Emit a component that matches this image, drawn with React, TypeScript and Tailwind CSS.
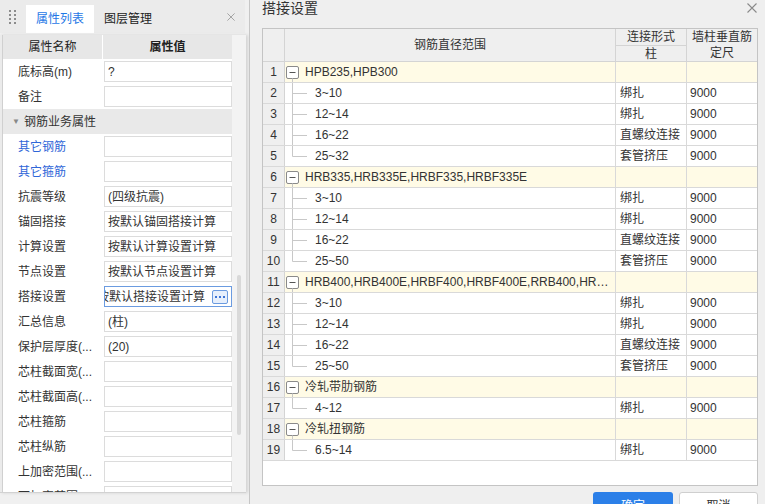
import React from "react";

type PropRow =
    | { kind: "group"; label: string }
    | { kind: "item"; label: string; value?: string; blue?: boolean; active?: boolean };

const propRows: PropRow[] = [
    { kind: "item", label: "底标高(m)", value: "?" },
    { kind: "item", label: "备注" },
    { kind: "group", label: "钢筋业务属性" },
    { kind: "item", label: "其它钢筋", blue: true },
    { kind: "item", label: "其它箍筋", blue: true },
    { kind: "item", label: "抗震等级", value: "(四级抗震)" },
    { kind: "item", label: "锚固搭接", value: "按默认锚固搭接计算" },
    { kind: "item", label: "计算设置", value: "按默认计算设置计算" },
    { kind: "item", label: "节点设置", value: "按默认节点设置计算" },
    { kind: "item", label: "搭接设置", value: "按默认搭接设置计算", active: true },
    { kind: "item", label: "汇总信息", value: "(柱)" },
    { kind: "item", label: "保护层厚度(...", value: "(20)" },
    { kind: "item", label: "芯柱截面宽(..." },
    { kind: "item", label: "芯柱截面高(..." },
    { kind: "item", label: "芯柱箍筋" },
    { kind: "item", label: "芯柱纵筋" },
    { kind: "item", label: "上加密范围(..." },
    { kind: "item", label: "下加密范围(..." },
];

type LapRow =
    | { kind: "group"; text: string }
    | { kind: "item"; range: string; mode: string; length: string; last?: boolean };

const lapRows: LapRow[] = [
    { kind: "group", text: "HPB235,HPB300" },
    { kind: "item", range: "3~10", mode: "绑扎", length: "9000" },
    { kind: "item", range: "12~14", mode: "绑扎", length: "9000" },
    { kind: "item", range: "16~22", mode: "直螺纹连接", length: "9000" },
    { kind: "item", range: "25~32", mode: "套管挤压", length: "9000", last: true },
    { kind: "group", text: "HRB335,HRB335E,HRBF335,HRBF335E" },
    { kind: "item", range: "3~10", mode: "绑扎", length: "9000" },
    { kind: "item", range: "12~14", mode: "绑扎", length: "9000" },
    { kind: "item", range: "16~22", mode: "直螺纹连接", length: "9000" },
    { kind: "item", range: "25~50", mode: "套管挤压", length: "9000", last: true },
    { kind: "group", text: "HRB400,HRB400E,HRBF400,HRBF400E,RRB400,HRB500,HRB500E,HRBF500,HRBF500E" },
    { kind: "item", range: "3~10", mode: "绑扎", length: "9000" },
    { kind: "item", range: "12~14", mode: "绑扎", length: "9000" },
    { kind: "item", range: "16~22", mode: "直螺纹连接", length: "9000" },
    { kind: "item", range: "25~50", mode: "套管挤压", length: "9000", last: true },
    { kind: "group", text: "冷轧带肋钢筋" },
    { kind: "item", range: "4~12", mode: "绑扎", length: "9000", last: true },
    { kind: "group", text: "冷轧扭钢筋" },
    { kind: "item", range: "6.5~14", mode: "绑扎", length: "9000", last: true },
];

function CloseX({ size = 9, color = "#9a9a9a" }: { size?: number; color?: string }) {
    return (
        <svg width={size} height={size} viewBox="0 0 10 10">
            <path d="M0.5 0.5 L9.5 9.5 M9.5 0.5 L0.5 9.5" stroke={color} strokeWidth="1.1" />
        </svg>
    );
}

function DragHandle() {
    return (
        <svg width="8" height="14" viewBox="0 0 8 14">
            {[0, 4, 8, 12].map((y) =>
                [0, 5].map((x) => <rect key={`${x}-${y}`} x={x} y={y} width="2" height="2" fill="#8c8c8c" />)
            )}
        </svg>
    );
}

function TreeLines({ group, last }: { group: boolean; last?: boolean }) {
    if (group) {
        return (
            <svg width="20" height="20" viewBox="0 0 20 20" className="shrink-0">
                <rect x="1.5" y="4.5" width="12" height="12" rx="1.5" fill="#fff" stroke="#8a8a8a" />
                <path d="M4.5 10.5 H10.5" stroke="#555" />
                <path d="M7.5 16.5 V20" stroke="#c8c8c8" />
            </svg>
        );
    }
    return (
        <svg width="30" height="20" viewBox="0 0 30 20" className="shrink-0">
            <path d={last ? "M7.5 0 V10.5" : "M7.5 0 V20"} stroke="#c8c8c8" />
            <path d="M7.5 10.5 H22" stroke="#c8c8c8" />
        </svg>
    );
}

function PropertyPanel() {
    return (
        <div className="flex w-[249px] shrink-0 flex-col bg-[#f0f0f0]">
            <div className="flex h-[33px] w-[245px] items-end bg-[#ebebeb]">
                <div className="flex h-full w-[26px] items-center pl-[9px]">
                    <DragHandle />
                </div>
                <div className="flex h-[28px] w-[68px] items-center justify-center bg-white text-[#1f78e6]">属性列表</div>
                <div className="flex h-[28px] w-[68px] items-center justify-center text-[#222]">图层管理</div>
                <div className="ml-auto flex h-full items-center pr-[10px]">
                    <CloseX size={8} />
                </div>
            </div>
            <div className="flex h-[460px] w-[249px] pt-[2px]">
                <div className="flex w-[246px] border-b border-[#d2d2d2] bg-[#ebebeb] pl-[2px] shadow-[2px_0_3px_rgba(0,0,0,0.12)]">
                    <div className="flex w-[230px] flex-col overflow-hidden border-l border-[#d0d0d0] bg-white">
                        <div className="flex h-[24px] shrink-0 bg-[#e7e7e7] text-[#222]">
                            <div className="flex w-[100px] items-center justify-center border-r border-white">属性名称</div>
                            <div className="flex flex-1 items-center justify-center font-bold">属性值</div>
                        </div>
                        {propRows.map((row, i) =>
                            row.kind === "group" ? (
                                <div key={i} className="flex h-[25px] shrink-0 items-center bg-[#e9e9e9] text-[#333]">
                                    <span className="w-[21px] pl-[9px] text-[8px] text-[#888]">▼</span>
                                    <span>{row.label}</span>
                                </div>
                            ) : (
                                <div key={i} className="flex h-[25px] shrink-0 items-center">
                                    <div
                                        className={`w-[101px] truncate pl-[15px] ${row.blue ? "text-[#2f66d8]" : "text-[#333]"}`}
                                    >
                                        {row.label}
                                    </div>
                                    {row.active ? (
                                        <div className="flex h-[21px] w-[128px] items-center border border-[#6b9be0] bg-white">
                                            <div className="min-w-0 flex-1 overflow-hidden">
                                                <span className="ml-[-8px] block whitespace-nowrap text-[#333]">
                                                    {row.value}
                                                </span>
                                            </div>
                                            <div className="mr-[3px] flex h-[14px] w-[16px] shrink-0 items-center justify-center rounded-[2px] border border-[#6b9be0] bg-[#e6effc]">
                                                <svg width="10" height="2" viewBox="0 0 10 2">
                                                    <rect x="0" y="0" width="2" height="2" fill="#3d74d6" />
                                                    <rect x="4" y="0" width="2" height="2" fill="#3d74d6" />
                                                    <rect x="8" y="0" width="2" height="2" fill="#3d74d6" />
                                                </svg>
                                            </div>
                                        </div>
                                    ) : (
                                        <div className="flex h-[21px] w-[128px] items-center border border-[#dcdcdc] bg-white pl-[3px] text-[#333]">
                                            {row.value}
                                        </div>
                                    )}
                                </div>
                            )
                        )}
                    </div>
                    <div className="flex w-[14px] justify-center bg-[#f3f3f3] pt-[240px]">
                        <div className="h-[160px] w-[4px] rounded-full bg-[#d9d9d9]" />
                    </div>
                </div>
            </div>
        </div>
    );
}

function LapDialog() {
    return (
        <div className="flex min-w-0 flex-1 flex-col overflow-hidden border-l border-[#c6c6c6] bg-[#efefef] pl-[12px]">
            <div className="flex h-[28px] shrink-0 items-start justify-between">
                <span className="text-[14px] leading-[17px] text-[#333]">搭接设置</span>
                <span className="mr-[8px] mt-[3px]">
                    <CloseX size={10} color="#8a8a8a" />
                </span>
            </div>
            <div className="flex h-[458px] w-[496px] shrink-0 flex-col border border-[#c4c4c4] bg-white text-[#333]">
                <div className="flex h-[33px] shrink-0 border-b border-[#d4d4d4] bg-[#efefef]">
                    <div className="w-[22px] border-r border-[#d4d4d4]" />
                    <div className="flex w-[331px] items-center justify-center border-r border-[#d4d4d4]">钢筋直径范围</div>
                    <div className="flex w-[71px] flex-col border-r border-[#d4d4d4]">
                        <div className="flex h-[17px] items-center justify-center border-b border-[#d4d4d4]">连接形式</div>
                        <div className="flex flex-1 items-center justify-center">柱</div>
                    </div>
                    <div className="flex flex-1 flex-col items-center justify-center leading-[16px]">
                        <span>墙柱垂直筋</span>
                        <span>定尺</span>
                    </div>
                </div>
                {lapRows.map((row, i) => (
                    <div
                        key={i}
                        className={`flex h-[21px] shrink-0 border-b border-[#d9d9d9] ${row.kind === "group" ? "bg-[#fffbe6]" : "bg-white"}`}
                    >
                        <div className="flex w-[22px] items-center justify-center border-r border-[#d4d4d4] bg-[#efefef]">
                            {i + 1}
                        </div>
                        <div className="flex w-[331px] min-w-0 items-center border-r border-[#d9d9d9] pr-[4px]">
                            <TreeLines group={row.kind === "group"} last={row.kind === "item" ? row.last : false} />
                            <span className="min-w-0 truncate">{row.kind === "group" ? row.text : row.range}</span>
                        </div>
                        <div className="flex w-[71px] items-center border-r border-[#d9d9d9] pl-[4px]">
                            {row.kind === "item" ? row.mode : ""}
                        </div>
                        <div className="flex flex-1 items-center pl-[3px]">{row.kind === "item" ? row.length : ""}</div>
                    </div>
                ))}
            </div>
            <div className="mt-[6px] flex shrink-0 justify-end gap-[6px] pr-[7px]">
                <div className="flex h-[28px] w-[80px] items-center justify-center rounded-[3px] bg-[#2b7fe8] text-white">
                    确定
                </div>
                <div className="flex h-[28px] w-[79px] items-center justify-center rounded-[3px] border border-[#cfcfcf] bg-white text-[#333]">
                    取消
                </div>
            </div>
        </div>
    );
}

export default function App() {
    return (
        <div className="flex h-[504px] w-[765px] overflow-hidden bg-[#f0f0f0] font-['Liberation_Sans','Noto_Sans_CJK_SC',sans-serif] text-[12px] leading-[16px]">
            <PropertyPanel />
            <LapDialog />
        </div>
    );
}
